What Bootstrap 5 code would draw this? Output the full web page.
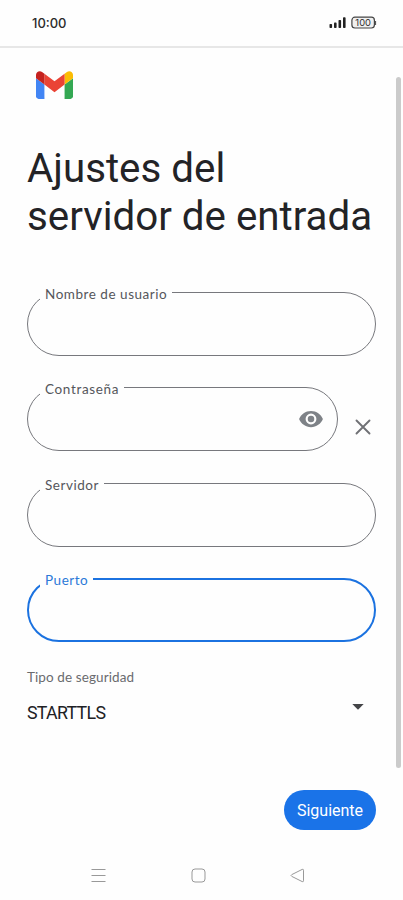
<!DOCTYPE html>
<html lang="es">
<head>
<meta charset="utf-8">
<meta name="viewport" content="width=device-width, initial-scale=1">
<title>Ajustes del servidor de entrada</title>
<link href="https://cdn.jsdelivr.net/npm/bootstrap@5.3.0/dist/css/bootstrap.min.css" rel="stylesheet">
<style>
body{font-family:Roboto,sans-serif;color:#202124;background:#fefefe}
svg{display:block}
.screen{width:403px;height:900px;overflow:hidden}
.status{height:48px;padding:1px 26px 1px 32px;border-bottom:2px solid #e7e7e7}
.clock{font:500 13px/16px Inter,sans-serif;color:#2b2b2b}
.content-area{padding:23px 27px 0}
.brand-mark{margin-left:9px}
h1{font-size:40.3px;line-height:48px;margin:46px -10px 51px 0;font-weight:400;white-space:nowrap;color:#232326}
.fields{display:grid;row-gap:31.4px}
.outline{height:64px;border:1px solid #77787d;border-radius:32px;background:transparent;box-shadow:none!important;padding:0 24px}
.outline.active{border:2px solid #1b72e0}
.float-tag{left:13px;top:-6px;padding:0 5px;background:#fefefe;font:400 13.5px/17px Lato,sans-serif;color:#55565b;white-space:nowrap;letter-spacing:.53px}
.float-tag.active{color:#2b79d8}
.tag-pass{letter-spacing:.66px}
.eye{right:14px;top:19px}
.clear{margin:15px 4px 0 16px}
.caption{margin-top:25.6px;font:400 13.5px/18px Lato,sans-serif;letter-spacing:.1px;color:#6a6b6e}
.choice{margin-top:16px;font-size:17.8px;line-height:22px}
.choice span{letter-spacing:-.7px}
.arrow{margin:-11px 12px 0 0}
.next{width:92px;height:40px;margin-top:66px;background:#1a73e8;color:#fff;font-size:16px;padding:2px 0 0}
.thumb{left:396px;top:77px;width:5px;height:691px;background:#cbcbcb}
.keys{padding:38px 98px 0 91px}
</style>
</head>
<body>
<div class="screen position-relative">
<header class="status d-flex justify-content-between align-items-center">
<span class="clock">10:00</span>
<svg width="48" height="14" viewBox="0 0 48 14"><g fill="#222"><rect x="0.500" y="8" width="2.600" height="4" rx=".8"/><rect x="5" y="6.600" width="2.600" height="5.400" rx=".8"/><rect x="9.500" y="4" width="2.600" height="8" rx=".8"/><rect x="14" y="1.200" width="2.600" height="10.800" rx=".8"/></g><rect x="22.900" y="1.200" width="22.500" height="10.800" rx="3" fill="#f0f0f0" stroke="#444" stroke-width="1.200"/><path d="M46.500 5v4" stroke="#555" stroke-width="1.200"/><text x="34.200" y="10" text-anchor="middle" font-family="Inter, sans-serif" font-size="9.400" fill="#333">100</text></svg>
</header>
<main class="content-area">
<svg class="brand-mark" width="37" height="28" viewBox="52 42 88 66"><path fill="#4285f4" d="M58 108h14V74L52 59v43c0 3.300 2.700 6 6 6"/><path fill="#34a853" d="M120 108h14c3.300 0 6-2.700 6-6V59l-20 15"/><path fill="#fbbc04" d="M120 48v26l20-15v-8c0-7.400-8.500-11.600-14.400-7.200"/><path fill="#ea4335" d="M72 74V48l24 18 24-18v26L96 92"/><path fill="#c5221f" d="M52 51v8l20 15V48l-5.600-4.200C60.500 39.400 52 43.600 52 51"/></svg>
<h1>Ajustes del<br>servidor de entrada</h1>
<form class="fields">
<div class="position-relative"><input id="u" class="form-control outline"><label for="u" class="float-tag position-absolute">Nombre de usuario</label></div>
<div class="d-flex"><div class="position-relative flex-grow-1"><input id="p" class="form-control outline"><label for="p" class="float-tag tag-pass position-absolute">Contraseña</label>
<svg class="eye position-absolute" width="26" height="26" viewBox="0 0 24 24" fill="#7e8287"><path d="M12 4.500C7 4.500 2.730 7.610 1 12c1.730 4.390 6 7.500 11 7.500s9.270-3.110 11-7.500c-1.730-4.390-6-7.500-11-7.500zM12 17a5 5 0 1 1 0-10 5 5 0 0 1 0 10zm0-8a3 3 0 1 0 0 6 3 3 0 0 0 0-6z"/></svg></div>
<svg class="clear align-self-center" width="18" height="18" viewBox="0 0 18 18"><path d="M2.500 2.500l13 13m0-13l-13 13" stroke="#707175" stroke-width="1.900" stroke-linecap="round"/></svg></div>
<div class="position-relative"><input id="s" class="form-control outline"><label for="s" class="float-tag position-absolute">Servidor</label></div>
<div class="position-relative"><input id="o" class="form-control outline active"><label for="o" class="float-tag active position-absolute">Puerto</label></div>
</form>
<div class="caption">Tipo de seguridad</div>
<div class="choice d-flex justify-content-between align-items-center"><span>STARTTLS</span><svg class="arrow" width="12" height="6" viewBox="0 0 12 6"><path d="M.3 0h11.400L6 5.800z" fill="#444548"/></svg></div>
<div class="d-flex justify-content-end"><button class="btn next rounded-pill border-0">Siguiente</button></div>
</main>
<footer class="keys d-flex justify-content-between">
<svg width="15" height="15" viewBox="0 0 15 15"><path d="M.5 1.500h14m-14 6h14m-14 6h14" stroke="#999" stroke-width="1"/></svg>
<svg width="15" height="15" viewBox="0 0 15 15"><rect x="1" y="1" width="13" height="13" rx="3" fill="none" stroke="#999"/></svg>
<svg width="15" height="15" viewBox="0 0 15 15"><path d="M12.200 1.400L1.800 6.600q-1.500.9 0 1.800l10.400 5.200q1.300.5 1.300-.8V2.200q0-1.300-1.300-.8z" fill="none" stroke="#999"/></svg>
</footer>
<div class="thumb position-absolute rounded-pill"></div>
</div>
<script src="https://cdn.jsdelivr.net/npm/bootstrap@5.3.0/dist/js/bootstrap.bundle.min.js"></script>
</body>
</html>
